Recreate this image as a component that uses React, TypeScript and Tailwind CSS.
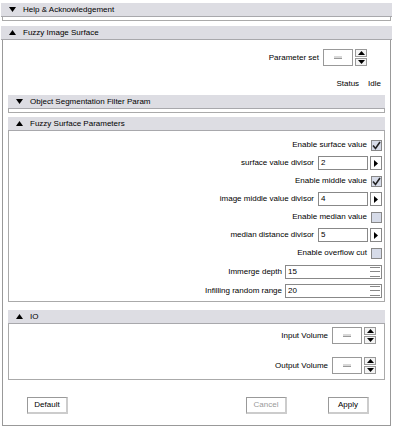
import React from 'react';

const Tri = ({ up }: { up?: boolean }) => (
  <svg width="7" height="5" viewBox="0 0 7 5" className="shrink-0">
    {up ? <polygon points="0,5 7,5 3.5,0" fill="#000" /> : <polygon points="0,0 7,0 3.5,5" fill="#000" />}
  </svg>
);

const Header = ({ title, up }: { title: string; up?: boolean }) => (
  <div className="h-[14px] bg-[#dddde3] border-b border-[#a8a8ac] flex items-center gap-[7px] pl-[8px]">
    <Tri up={up} />
    <span>{title}</span>
  </div>
);

const Spinner = () => (
  <div className="flex flex-col gap-[1px]">
    <div className="w-[12px] h-[8px] border border-[#999] bg-[#f4f4f4] flex items-center justify-center">
      <svg width="7" height="4" viewBox="0 0 7 4"><polygon points="0,4 7,4 3.5,0" fill="#000" /></svg>
    </div>
    <div className="w-[12px] h-[8px] border border-[#999] bg-[#f4f4f4] flex items-center justify-center">
      <svg width="7" height="4" viewBox="0 0 7 4"><polygon points="0,0 7,0 3.5,4" fill="#000" /></svg>
    </div>
  </div>
);

const Combo = ({ label }: { label: string }) => (
  <div className="flex items-center justify-end">
    <span className="mr-[4px]">{label}</span>
    <div className="w-[30px] h-[17px] border border-[#999] bg-white flex items-center justify-center mr-[2px]">
      <div className="w-[8px] h-[3px] bg-[#d8d8d8] border-b border-[#999]" />
    </div>
    <Spinner />
  </div>
);

const Check = ({ label, on }: { label: string; on?: boolean }) => (
  <div className="h-[18px] flex items-center justify-end gap-[4px]">
    <span>{label}</span>
    <div className="w-[11px] h-[11px] border border-[#888] bg-[#d6dbe8] flex items-center justify-center">
      {on && (
        <svg width="9" height="9" viewBox="0 0 9 9">
          <path d="M1 4.5 L3.5 7.5 L8 1" stroke="#222" strokeWidth="1.6" fill="none" />
        </svg>
      )}
    </div>
  </div>
);

const Arrow = ({ label, value }: { label: string; value: string }) => (
  <div className="h-[18px] flex items-center justify-end gap-[2px]">
    <span className="mr-[2px]">{label}</span>
    <div className="w-[50px] h-[14px] border border-[#888] bg-white flex items-center pl-[2px]">{value}</div>
    <div className="w-[12px] h-[14px] border border-[#888] bg-white flex items-center justify-center">
      <svg width="4" height="7" viewBox="0 0 4 7"><polygon points="0,0 4,3.5 0,7" fill="#000" /></svg>
    </div>
  </div>
);

const Slide = ({ label, value }: { label: string; value: string }) => (
  <div className="h-[19px] flex items-center justify-end gap-[3px]">
    <span>{label}</span>
    <div className="w-[97px] h-[14px] border border-[#888] bg-white flex items-center pl-[2px] justify-between">
      <span>{value}</span>
      <div className="w-[10px] h-[10px] flex flex-col justify-between mr-[1px]">
        <div className="h-[1px] bg-[#888]" />
        <div className="h-[1px] bg-[#888]" />
        <div className="h-[1px] bg-[#888]" />
      </div>
    </div>
  </div>
);

const Btn = ({ label, dim }: { label: string; dim?: boolean }) => (
  <div className={`w-[41px] h-[17px] border-l border-t border-[#999] border-r-2 border-b-2 border-r-[#ccc] border-b-[#ccc] bg-white flex items-center justify-center ${dim ? 'text-[#999]' : ''}`}>
    {label}
  </div>
);

export default function App() {
  return (
    <div className="w-[393px] h-[427px] bg-white font-['Liberation_Sans',sans-serif] text-[8px] leading-none text-black pt-[3px] overflow-hidden">
      <div className="pl-[1px] pr-[1px]">
        <Header title="Help & Acknowledgement" />
        <div className="h-[4px] border-x border-b border-[#aaa] ml-[1px] mr-[1px]" />
      </div>

      <div className="mt-[5px] pl-[1px] pr-[1px]">
        <Header title="Fuzzy Image Surface" up />
      </div>
      <div className="ml-[2px] w-[389px] h-[386px] border-l border-r border-b border-[#999] px-[5px] pt-[9px]">
        <div className="pr-[18px]">
          <Combo label="Parameter set" />
        </div>
        <div className="flex justify-end gap-[9px] pr-[4px] mt-[14px]">
          <span>Status</span>
          <span>Idle</span>
        </div>

        <div className="mt-[7px]">
          <Header title="Object Segmentation Filter Param" />
          <div className="h-[4px] border-x border-b border-[#aaa]" />
        </div>

        <div className="mt-[4px]">
          <Header title="Fuzzy Surface Parameters" up />
          <div className="h-[171px] border-x border-b border-[#aaa] pt-[5px] pr-[2px]">
            <Check label="Enable surface value" on />
            <Arrow label="surface value divisor" value="2" />
            <Check label="Enable middle value" on />
            <Arrow label="image middle value divisor" value="4" />
            <Check label="Enable median value" />
            <Arrow label="median distance divisor" value="5" />
            <Check label="Enable overflow cut" />
            <Slide label="Immerge depth" value="15" />
            <Slide label="Infilling random range" value="20" />
          </div>
        </div>

        <div className="mt-[8px]">
          <Header title="IO" up />
          <div className="h-[56px] border-x border-b border-[#aaa] pt-[3px] pr-[8px] flex flex-col gap-[13px]">
            <Combo label="Input Volume" />
            <Combo label="Output Volume" />
          </div>
        </div>

        <div className="flex items-center mt-[17px] pl-[19px]">
          <Btn label="Default" />
          <div className="flex-1" />
          <Btn label="Cancel" dim />
          <div className="w-[41px]" />
          <Btn label="Apply" />
          <div className="w-[16px]" />
        </div>
      </div>
    </div>
  );
}
